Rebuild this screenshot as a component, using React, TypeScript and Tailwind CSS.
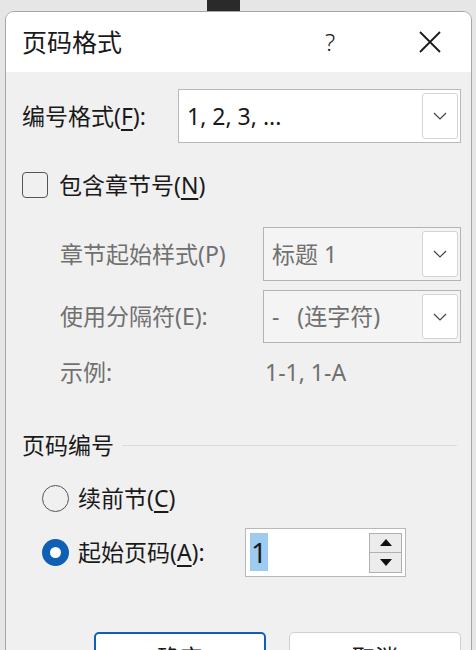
import React from 'react';

const font = { fontFamily: '"Noto Sans", "Noto Sans CJK SC", sans-serif' };

function Chevron() {
  return (
    <svg width="14" height="8" viewBox="0 0 14 8" fill="none">
      <path d="M1 1l6 6 6-6" stroke="#444" strokeWidth="1.2" />
    </svg>
  );
}

function Combo({ text, disabled, className }: { text: string; disabled?: boolean; className: string }) {
  return (
    <div
      className={`flex items-center border ${
        disabled ? 'border-[#b4b4b4] bg-[#f4f4f4] text-[#707070]' : 'border-[#b8b8b8] bg-white text-[#1a1a1a]'
      } ${className}`}
    >
      <div className="flex-1 pl-[8px] text-[23px] leading-none whitespace-pre">{text}</div>
      <div className="mr-[2px] flex h-[calc(100%-6px)] w-[36px] items-center justify-center rounded-[3px] border border-[#d4d4d4] bg-white">
        <Chevron />
      </div>
    </div>
  );
}

export default function App() {
  return (
    <div className="h-[650px] w-[476px] overflow-hidden bg-[#e6e6e6]" style={font}>
      <div className="relative h-[11px]">
        <div className="absolute left-[207px] top-0 h-[11px] w-[33px] bg-[#2a2a2a]" />
      </div>
      <div className="ml-[5px] w-[467px] overflow-hidden rounded-t-[9px] border border-[#a6a6a6] bg-[#f0f0f0]">
        {/* title bar */}
        <div className="flex h-[60px] items-center bg-white pl-[16px] text-[#1a1a1a]">
          <div className="flex-1 text-[25px] leading-none">页码格式</div>
          <div className="w-[92px] text-[24px] leading-none font-light">?</div>
          <div className="mr-[28px] flex w-[26px] justify-center">
            <svg width="22" height="22" viewBox="0 0 22 22">
              <path d="M1 1l20 20M21 1L1 21" stroke="#1a1a1a" strokeWidth="1.8" />
            </svg>
          </div>
        </div>

        <div className="h-[600px] pl-[16px] pt-[17px] text-[23px] leading-none text-[#1a1a1a]">
          <div className="flex items-center">
            <div className="w-[156px]">
              编号格式(<span className="underline underline-offset-4">F</span>):
            </div>
            <Combo text="1, 2, 3, ..." className="h-[54px] w-[283px]" />
          </div>

          <div className="mt-[29px] flex items-center">
            <div className="h-[26px] w-[26px] rounded-[4px] border-[1.5px] border-[#555]" />
            <div className="ml-[11px]">
              包含章节号(<span className="underline underline-offset-4">N</span>)
            </div>
          </div>

          <div className="pl-[38px] text-[#707070]">
            <div className="mt-[29px] flex items-center">
              <div className="w-[203px] whitespace-nowrap">章节起始样式(P)</div>
              <Combo text="标题 1" disabled className="h-[54px] w-[198px]" />
            </div>
            <div className="mt-[9px] flex items-center">
              <div className="w-[203px] whitespace-nowrap">使用分隔符(E):</div>
              <Combo text="-   (连字符)" disabled className="h-[53px] w-[198px]" />
            </div>
            <div className="mt-[14px] flex h-[30px] items-center">
              <div className="w-[205px]">示例:</div>
              <div>1-1, 1-A</div>
            </div>
          </div>

          <div className="mt-[43px] flex h-[30px] items-center pr-[14px]">
            <div>页码编号</div>
            <div className="ml-[8px] h-px flex-1 bg-[#dcdcdc]" />
          </div>

          <div className="mt-[25px] flex h-[27px] items-center pl-[20px]">
            <div className="h-[27px] w-[27px] rounded-full border-[1.5px] border-[#555]" />
            <div className="ml-[9px]">
              续前节(<span className="underline underline-offset-4">C</span>)
            </div>
          </div>

          <div className="mt-[16px] flex items-center pl-[20px]">
            <div className="flex h-[27px] w-[27px] items-center justify-center rounded-full bg-[#0f5fb5]">
              <div className="h-[11px] w-[11px] rounded-full bg-white" />
            </div>
            <div className="ml-[9px] w-[167px] whitespace-nowrap">
              起始页码(<span className="underline underline-offset-4">A</span>):
            </div>
            <div className="flex h-[49px] w-[161px] items-center border border-[#b8b8b8] bg-white">
              <div className="ml-[4px] flex-1">
                <span className="bg-[#9ecbf0] px-[1px] text-[28px] leading-[33px]">1</span>
              </div>
              <div className="mr-[3px] flex flex-col">
                <div className="flex h-[20px] w-[33px] items-center justify-center border border-[#b0b0b0] bg-[#ececec]">
                  <svg width="12" height="7" viewBox="0 0 12 7">
                    <path d="M6 0L12 7H0z" fill="#111" />
                  </svg>
                </div>
                <div className="-mt-px flex h-[21px] w-[33px] items-center justify-center border border-[#b0b0b0] bg-[#ececec]">
                  <svg width="12" height="7" viewBox="0 0 12 7">
                    <path d="M0 0h12L6 7z" fill="#111" />
                  </svg>
                </div>
              </div>
            </div>
          </div>

          <div className="mt-[55px] flex gap-[23px] pl-[72px]">
            <div className="flex h-[50px] w-[172px] items-center justify-center rounded-[5px] border-2 border-[#0f5fb5] bg-white">
              确定
            </div>
            <div className="flex h-[50px] w-[172px] items-center justify-center rounded-[5px] border border-[#d0d0d0] bg-white">
              取消
            </div>
          </div>
        </div>
      </div>
    </div>
  );
}
